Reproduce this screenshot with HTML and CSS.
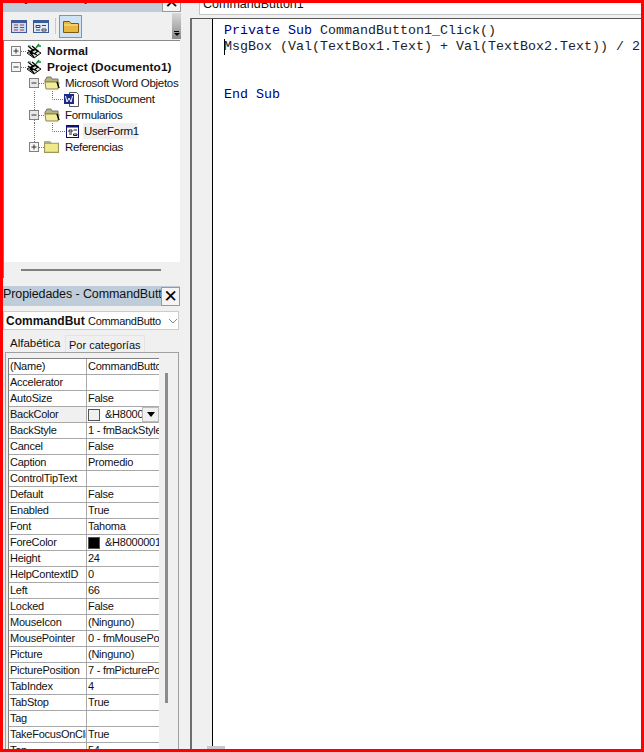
FILE: index.html
```html
<!DOCTYPE html>
<html lang="es">
<head>
<meta charset="utf-8">
<title>VBA</title>
<link rel="stylesheet" href="styles.css">
</head>
<body>
<svg class="defs" width="0" height="0">
  <defs>
    <symbol id="proj" viewBox="0 0 16 16">
      <path d="M1 10l7-4 7 4-7 5z" fill="#dfe8df" stroke="#000" stroke-width="1"/>
      <path d="M2 3l5 4-3 3 4 4M6 3l6 5-4 3M10 6l-5 3 6 3M2 7l5 4" stroke="#000" stroke-width="1.300" fill="none"/>
      <path d="M10 5l3-4M12 3h3" stroke="#1a8a3a" stroke-width="1.500"/>
      <path d="M2 3h3" stroke="#4a7a5a"/>
    </symbol>
    <symbol id="open" viewBox="0 0 16 14">
      <path d="M1 4l2-3h4l1 2h6v3H1z" fill="#b9b27a" stroke="#777"/>
      <path d="M1 6h14l-1 7H2z" fill="#f2ec9a" stroke="#8b8552"/>
      <path d="M13 6l2 6" stroke="#000" stroke-width="1.400"/>
    </symbol>
    <symbol id="closed" viewBox="0 0 14 12">
      <path d="M0.500 3V1.500h5l1 1.500z" fill="#d6cf8a" stroke="#999"/>
      <path d="M0.500 3h13v8.500H0.500z" fill="#efe989" stroke="#9c9660"/>
    </symbol>
    <symbol id="form" viewBox="0 0 13 13">
      <rect x="0.500" y="0.500" width="12" height="12" fill="#fff" stroke="#10106a"/>
      <rect x="0" y="0" width="13" height="2.500" fill="#10106a"/>
      <path d="M3 5h3v2H3zM7.500 5H11M3 9h3M7.500 9H11v1.500H7.500z" fill="none" stroke="#222"/>
    </symbol>
  </defs>
</svg>
<div class="screen">
  <aside class="side">
    <div class="pane-title">
      <span class="pane-title-text">Proyecto - Project</span>
      <span class="close close-top">&#10005;</span>
    </div>
    <div class="toolbar">
      <svg class="tool" width="16" height="13" viewBox="0 0 16 13"><rect x="0.500" y="0.500" width="15" height="12" fill="#cfdcf0" stroke="#3a5a9a"/><rect x="1" y="1" width="14" height="2" fill="#3a5a9a"/><path d="M3 5h4M9 5h4M3 7.500h4M9 7.500h4M3 10h4M9 10h4" stroke="#b04040"/></svg>
      <svg class="tool" width="16" height="13" viewBox="0 0 16 13"><rect x="0.500" y="0.500" width="15" height="12" fill="#dfe8f5" stroke="#3a5a9a"/><rect x="1" y="1" width="14" height="2" fill="#3a5a9a"/><path d="M3 5.500h4v2H3zM9 5.500h4M3 10h4M9 9h4v2H9z" fill="none" stroke="#445"/></svg>
      <span class="tool-sep"></span>
      <span class="tool-active">
        <svg width="16" height="13" viewBox="0 0 16 13"><path d="M0.500 12.500V1.500h6l1.500 2h7.500v9z" fill="#e8b93e" stroke="#7a5a10"/><path d="M1 5h14" stroke="#f8e6a0"/></svg>
      </span>
      <span class="tool-grip"><i class="tool-grip-bar"></i><i class="tool-grip-arrow"></i></span>
    </div>
    <div class="tree">
      <div class="tree-body">
        <div class="node">
          <svg class="guide g0"><rect x="3.500" y="3.500" width="9" height="9" fill="#f4f4f4" stroke="#808080"/><path d="M5.500 8h5M8 5.500v5" stroke="#333"/><path d="M13 8.500h5" class="dots"/></svg>
          <svg class="icon"><use href="#proj"/></svg><b class="label l0">Normal</b>
        </div>
        <div class="node">
          <svg class="guide g0"><rect x="3.500" y="3.500" width="9" height="9" fill="#f4f4f4" stroke="#808080"/><path d="M5.500 8h5" stroke="#333"/><path d="M13 8.500h5" class="dots"/></svg>
          <svg class="icon"><use href="#proj"/></svg><b class="label l0">Project (Documento1)</b>
        </div>
        <div class="node">
          <svg class="guide g1"><rect x="21.500" y="3.500" width="9" height="9" fill="#e8e8e8" stroke="#808080"/><path d="M23.500 8h5" stroke="#333"/><path d="M31 8.500h6" class="dots"/></svg>
          <svg class="icon"><use href="#open"/></svg><span class="label l1">Microsoft Word Objetos</span>
        </div>
        <div class="node">
          <svg class="guide g2"><path d="M26.500 0v16M44.500 0v8.500H56" class="dots"/></svg>
          <svg class="icon" viewBox="0 0 16 16"><path d="M5.500 1.500h7l2 2v12h-9z" fill="#fff" stroke="#555"/><rect x="0" y="3" width="10" height="10" fill="#1c2a8a"/><path d="M1.500 5l1.500 6 2-4 2 4 1.500-6" stroke="#fff" fill="none"/></svg>
          <span class="label l2">ThisDocument</span>
        </div>
        <div class="node">
          <svg class="guide g1"><path d="M26.500 0v3M26.500 13v3" class="dots"/><rect x="21.500" y="3.500" width="9" height="9" fill="#e8e8e8" stroke="#808080"/><path d="M23.500 8h5" stroke="#333"/><path d="M31 8.500h6" class="dots"/></svg>
          <svg class="icon"><use href="#open"/></svg><span class="label l1">Formularios</span>
        </div>
        <div class="node">
          <svg class="guide g2"><path d="M26.500 0v16M44.500 0v8.500H58" class="dots"/></svg>
          <svg class="icon"><use href="#form" x="2" y="2" width="13" height="13"/></svg>
          <span class="label l2 hl">UserForm1</span>
        </div>
        <div class="node">
          <svg class="guide g1"><path d="M26.500 0v3" class="dots"/><rect x="21.500" y="3.500" width="9" height="9" fill="#f4f4f4" stroke="#808080"/><path d="M23.500 8h5M26 5.500v5" stroke="#333"/><path d="M31 8.500h6" class="dots"/></svg>
          <svg class="icon"><use href="#closed" x="0" y="1" width="15" height="13"/></svg><span class="label l1">Referencias</span>
        </div>
      </div>
      <div class="tree-scroll"><i class="tree-thumb"></i></div>
    </div>
    <div class="prop-title">
      <span class="prop-title-text">Propiedades - CommandButton1</span>
      <span class="close">&#10005;</span>
    </div>
    <div class="combo">
      <b class="combo-name">CommandBut</b>
      <span class="combo-type">CommandButton</span>
      <svg class="chev" width="10" height="6" viewBox="0 0 10 6"><path d="M1 1l4 4 4-4" fill="none" stroke="#888"/></svg>
    </div>
    <div class="tabs">
      <span class="tab tab-on">Alfabética</span>
      <span class="tab">Por categorías</span>
    </div>
    <div class="sheet">
      <div class="grid">
        <div class="row"><span class="name">(Name)</span><span class="val">CommandButton1</span></div>
        <div class="row"><span class="name">Accelerator</span><span class="val"></span></div>
        <div class="row"><span class="name">AutoSize</span><span class="val">False</span></div>
        <div class="row"><span class="name sel">BackColor</span><span class="val val-color"><i class="swatch"></i><span class="val-clip">&amp;H8000000F&amp;</span><span class="drop"><i class="drop-arrow"></i></span></span></div>
        <div class="row"><span class="name">BackStyle</span><span class="val">1 - fmBackStyleOpaque</span></div>
        <div class="row"><span class="name">Cancel</span><span class="val">False</span></div>
        <div class="row"><span class="name">Caption</span><span class="val">Promedio</span></div>
        <div class="row"><span class="name">ControlTipText</span><span class="val"></span></div>
        <div class="row"><span class="name">Default</span><span class="val">False</span></div>
        <div class="row"><span class="name">Enabled</span><span class="val">True</span></div>
        <div class="row"><span class="name">Font</span><span class="val">Tahoma</span></div>
        <div class="row"><span class="name">ForeColor</span><span class="val val-color"><i class="swatch swatch-black"></i><span class="val-clip">&amp;H80000012&amp;</span></span></div>
        <div class="row"><span class="name">Height</span><span class="val">24</span></div>
        <div class="row"><span class="name">HelpContextID</span><span class="val">0</span></div>
        <div class="row"><span class="name">Left</span><span class="val">66</span></div>
        <div class="row"><span class="name">Locked</span><span class="val">False</span></div>
        <div class="row"><span class="name">MouseIcon</span><span class="val">(Ninguno)</span></div>
        <div class="row"><span class="name">MousePointer</span><span class="val">0 - fmMousePointerDefault</span></div>
        <div class="row"><span class="name">Picture</span><span class="val">(Ninguno)</span></div>
        <div class="row"><span class="name">PicturePosition</span><span class="val">7 - fmPicturePositionAbove</span></div>
        <div class="row"><span class="name">TabIndex</span><span class="val">4</span></div>
        <div class="row"><span class="name">TabStop</span><span class="val">True</span></div>
        <div class="row"><span class="name">Tag</span><span class="val"></span></div>
        <div class="row"><span class="name">TakeFocusOnClick</span><span class="val">True</span></div>
        <div class="row"><span class="name">Top</span><span class="val">54</span></div>
      </div>
      <div class="sheet-scroll"><i class="sheet-thumb"></i></div>
    </div>
  </aside>
  <main class="editor">
    <div class="obj-bar"><div class="obj-box">CommandButton1</div></div>
    <div class="code-wrap">
      <div class="gutter"></div>
      <div class="code">
        <div class="line"><span class="kw">Private Sub</span> CommandButton1_Click()</div>
        <div class="line caret">MsgBox (Val(TextBox1.Text) + Val(TextBox2.Text)) / 2</div>
        <div class="line">&nbsp;</div>
        <div class="line">&nbsp;</div>
        <div class="line"><span class="kw">End Sub</span></div>
      </div>
      <div class="grip-mark"></div>
    </div>
  </main>
</div>
</body>
</html>
```
FILE: styles.css
```css
* { box-sizing: border-box; }
html, body { margin: 0; padding: 0; background: #fff; }
.defs { position: absolute; }
.screen {
  width: 644px; height: 752px; overflow: hidden;
  border: 3px solid #fe0000;
  display: flex; background: #f0f0f0;
  font: 11.500px/16px "Liberation Sans", sans-serif; color: #111;
}
.side { width: 178px; flex: none; display: flex; flex-direction: column; height: 760px; }
.pane-title { height: 9px; background: #bfcddb; position: relative; overflow: hidden; flex: none; }
.pane-title-text { display: block; margin: -15px 0 0 2px; font-size: 12.500px; line-height: 18px; }
.close {
  width: 19px; height: 19px; flex: none; background: #f4f4f4; border: 1px solid #999;
  display: flex; align-items: center; justify-content: center; font: bold 17px/1 "DejaVu Sans", sans-serif; color: #000;
}
.close-top { position: absolute; right: 0; top: -10px; }
.toolbar { height: 28px; flex: none; display: flex; align-items: center; padding-left: 8px; position: relative; }
.tool { margin-right: 6px; }
.tool-sep { width: 1px; height: 16px; background: #c8c8c8; margin: 0 3px 0 0; }
.tool-active { width: 23px; height: 23px; display: flex; align-items: center; justify-content: center; background: #cfe3f5; border: 1px solid #5f9ed0; }
.tool-grip { width: 9px; height: 26px; margin-left: auto; background: linear-gradient(#d8d8d8, #8a8a8a); display: flex; flex-direction: column; align-items: center; justify-content: flex-end; padding-bottom: 3px; }
.tool-grip-bar { width: 5px; height: 1px; background: #000; margin-bottom: 1px; }
.tool-grip-arrow { width: 0; height: 0; border: 3px solid transparent; border-top-color: #000; border-bottom: 0; }
.tree { height: 238px; flex: none; width: 177px; background: #fff; border-top: 1px solid #8a8a8a; border-left: 1px solid #7a7a7a; display: flex; flex-direction: column; }
.tree-body { flex: 1; padding-top: 2px; overflow: hidden; }
.tree-scroll { height: 16px; background: #f0f0f0; display: flex; align-items: center; padding-left: 17px; }
.tree-thumb { width: 140px; height: 2px; background: #808080; }
.node { height: 16px; display: flex; align-items: center; padding-left: 4px; white-space: nowrap; font-size: 11.500px; letter-spacing: -0.3px; }
.guide { height: 16px; flex: none; overflow: visible; }
.g0 { width: 18px; }
.g1 { width: 36px; }
.g2 { width: 56px; }
.dots { fill: none; stroke: #777; stroke-dasharray: 1 1; }
.icon { width: 16px; height: 16px; flex: none; }
.label { line-height: 16px; }
.l0 { margin-left: 5px; font-size: 11.800px; font-weight: 700; letter-spacing: 0.1px; }
.l1 { margin-left: 5px; }
.l2 { margin-left: 3px; padding-left: 1px; padding-right: 1px; }
.hl { background: #f0f0f0; width: 55px; }
.prop-title { height: 20px; margin-top: 8px; flex: none; background: #bfcddb; display: flex; overflow: hidden; width: 177px; padding-top: 1px; }
.prop-title-text { flex: 1; min-width: 0; overflow: hidden; white-space: nowrap; font-size: 12.500px; line-height: 14px; letter-spacing: -0.1px; }
.combo { height: 19px; margin-top: 5px; flex: none; width: 176px; background: #fff; border: 1px solid #ccc; display: flex; align-items: center; padding-left: 2px; position: relative; }
.combo-name { width: 82px; overflow: hidden; flex: none; font-size: 12px; }
.combo-type { width: 73px; overflow: hidden; white-space: nowrap; flex: none; font-size: 11px; letter-spacing: -0.3px; }
.chev { margin-left: 7px; }
.tabs { height: 22px; flex: none; display: flex; align-items: flex-end; padding-left: 2px; }
.tab { height: 17px; padding: 0 3px; background: #f0f0f0; border: 1px solid #e4e4e4; border-bottom: 0; font-size: 11px; line-height: 18px; }
.tab-on { height: 21px; padding: 4px 6px 0 5px; border: 0; line-height: 16px; width: 60px; font-size: 11.500px; }
.sheet { flex: 1; margin: 0 0 0 2px; width: 174px; border: 1px solid #a0a0a0; border-bottom: 0; padding: 5px 0 0 2px; display: flex; min-height: 0; }
.grid { width: 151px; flex: none; border-top: 1px solid #808080; border-left: 1px solid #808080; }
.row { height: 16px; display: grid; grid-template-columns: 78px 72px; border-bottom: 1px solid #a8a8a8; background: #fff; }
.name, .val { overflow: hidden; white-space: nowrap; font-size: 11px; letter-spacing: -0.25px; line-height: 15px; padding-left: 1px; }
.name { border-right: 1px solid #a8a8a8; }
.sel { background: #f0f0f0; }
.val-color { display: flex; align-items: center; position: relative; background: #fff; }
.swatch { width: 12px; height: 12px; flex: none; background: #f0f0f0; border: 1px solid #555; margin-right: 5px; }
.swatch-black { background: #000; }
.val-clip { flex: 1; min-width: 0; overflow: hidden; }
.drop { position: absolute; right: 0; top: 0; width: 17px; height: 15px; background: #f0f0f0; border: 1px solid #bbb; display: flex; align-items: center; justify-content: center; }
.drop-arrow { width: 0; height: 0; border: 4px solid transparent; border-top: 5px solid #000; border-bottom: 0; }
.sheet-scroll { flex: 1; padding: 15px 0 0 6px; }
.sheet-thumb { display: block; width: 3px; height: 330px; background: #8c8c8c; }
.editor { flex: 1; min-width: 0; display: flex; flex-direction: column; padding-left: 9px; }
.obj-bar { height: 15px; flex: none; padding-left: 9px; }
.obj-box { height: 12px; background: #fff; border: 1px solid #c4c4c4; border-top: 0; border-right: 0; font-size: 12.500px; line-height: 2px; padding: 0 0 0 3px; overflow: hidden; }
.code-wrap { flex: 1; display: flex; background: #fff; border-left: 2px solid #6e6e6e; border-top: 1px solid #555; position: relative; }
.gutter { width: 20px; flex: none; background: #f0f0f0; border-right: 1px solid #000; box-sizing: content-box; }
.code { flex: 1; padding: 4px 0 0 11px; font: 13.333px/16px "Liberation Mono", monospace; color: #222; white-space: nowrap; overflow: hidden; }
.kw { color: #00007f; }
.caret { box-shadow: inset 1px 0 0 #000; }
.grip-mark { position: absolute; left: 15px; bottom: 0; width: 18px; height: 3px; background: #c8c8c8; }
```
